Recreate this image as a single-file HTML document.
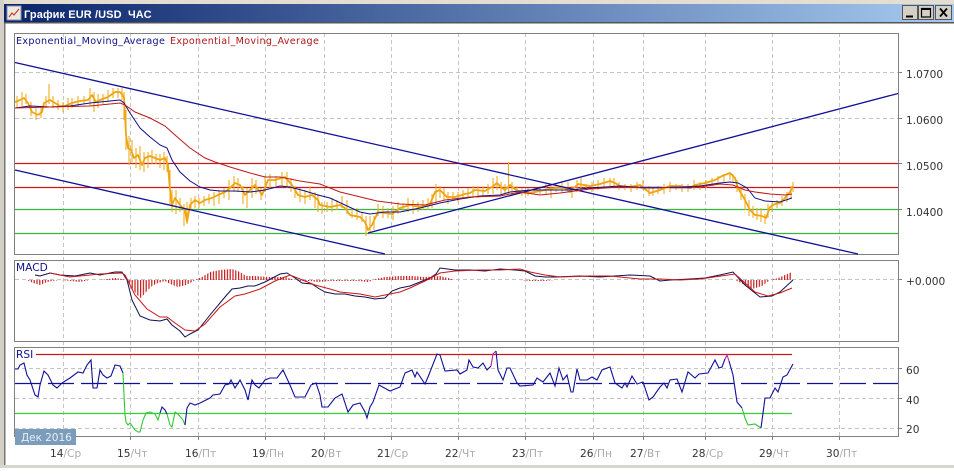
<!DOCTYPE html>
<html><head><meta charset="utf-8"><style>
html,body{margin:0;padding:0;background:#fff;width:954px;height:474px;overflow:hidden}
svg{display:block}
text{font-family:"DejaVu Sans","Liberation Sans",sans-serif;font-size:10.6px;fill:#333}
.d tspan{fill:#aaa}
</style></head><body>
<svg width="954" height="474" viewBox="0 0 954 474" xmlns="http://www.w3.org/2000/svg" shape-rendering="auto">
<defs>
<linearGradient id="t" x1="0" x2="1" y1="0" y2="0"><stop offset="0" stop-color="#0a246a"/><stop offset="1" stop-color="#a6caf0"/></linearGradient>
<pattern id="h" width="2.8" height="10" patternUnits="userSpaceOnUse"><rect width="1.2" height="10" fill="#c81818"/></pattern>
</defs>
<rect x="0" y="0" width="954" height="474" fill="#fff"/>
<rect x="0" y="0" width="954" height="4" fill="#e4ddd2"/>
<rect x="0" y="0" width="4" height="468" fill="#d4d0c8"/>
<rect x="4" y="4" width="1.5" height="462" fill="#777"/>
<rect x="0" y="465" width="954" height="3" fill="#d8d6cc"/>
<rect x="4" y="4" width="950" height="18" fill="url(#t)"/>
<rect x="4" y="22" width="950" height="1.5" fill="#555"/>
<!-- icon -->
<rect x="7" y="6" width="14" height="14" fill="#ece9e0" stroke="#8a94a8"/>
<path d="M9 17 L12 13 L14 15 L19 9" fill="none" stroke="#c04040" stroke-width="1.2"/>
<text x="24" y="18" style="font-family:'Liberation Sans',sans-serif;font-weight:bold;font-size:11px;fill:#fff;letter-spacing:.1px" xml:space="preserve">График EUR /USD  ЧАС</text>
<!-- buttons -->
<g fill="#d4d0c8" stroke="#555" stroke-width="1">
<rect x="902.5" y="5.5" width="15" height="14"/><rect x="918.5" y="5.5" width="15" height="14"/><rect x="935.5" y="5.5" width="16" height="14"/>
</g>
<path d="M906 16.5H913" stroke="#000" stroke-width="2"/>
<rect x="921.5" y="8.5" width="9" height="8.5" fill="none" stroke="#000" stroke-width="1.2"/><path d="M921 9H931" stroke="#000" stroke-width="2"/>
<path d="M940 8.5L947 16.5M947 8.5L940 16.5" stroke="#000" stroke-width="1.8"/>

<!-- grid -->
<g stroke="#c4c4c4" stroke-width="1" stroke-dasharray="4 3" fill="none">
<path d="M63.5 33V436M130.5 33V436M198.5 33V436M265.5 33V436M324.5 33V436M391.5 33V436M458.5 33V436M525.5 33V436M593.5 33V436M643.5 33V436M705.5 33V436M772.5 33V436M839.5 33V436"/>
<path d="M15 72.5H898M15 118.5H898M15 163.5H898M15 209.5H898M15 279.5H898M15 368.5H898M15 398.5H898M15 428.5H898"/>
</g>
<rect x="14.5" y="33.5" width="884" height="221" fill="none" stroke="#808080"/>
<rect x="14.5" y="260.5" width="884" height="81" fill="none" stroke="#808080"/>
<rect x="14.5" y="347.5" width="884" height="89" fill="none" stroke="#808080"/>
<path d="M898 72.5h4M898 118.5h4M898 163.5h4M898 209.5h4M898 279.5h4M898 368.5h4M898 398.5h4M898 428.5h4M63.5 436v4M130.5 436v4M198.5 436v4M265.5 436v4M324.5 436v4M391.5 436v4M458.5 436v4M525.5 436v4M593.5 436v4M643.5 436v4M705.5 436v4M772.5 436v4M839.5 436v4" stroke="#808080"/>

<!-- horizontal levels -->
<path d="M15 163.5H898M15 187.5H898" stroke="#c81818" stroke-width="1.2"/>
<path d="M15 209.5H898M15 233.5H898" stroke="#3cb43c" stroke-width="1.2"/>

<!-- price wicks -->
<path d="M17 96V108M22 92V106M26 94V104M31 102V116M36 108V120M41 106V118M46 96V108M49 84V104M53 96V108M58 100V110M63 102V112M68 98V110M72 98V108M78 96V106M84 96V104M90 88V106M94 92V112M98 94V108M103 94V104M108 90V102M113 88V98M118 88V98M122 88V100M124 92V120M126 110V150M129 136V165M132 140V162M136 148V168M140 146V170M144 152V172M148 152V168M152 150V164M156 154V164M160 154V168M164 152V170M167 156V172M170 170V205M172 190V212M176 190V214M180 198V212M184 204V226M187 202V224M191 198V210M195 196V208M199 198V208M204 196V206M209 194V204M214 192V206M219 190V204M224 188V198M229 180V200M234 176V192M238 178V192M243 186V204M247 188V208M252 178V198M256 180V194M261 188V200M265 176V192M270 174V188M276 176V186M282 172V186M287 172V188M291 178V192M295 186V198M300 188V202M305 190V204M310 186V200M315 192V208M318 194V212M322 202V214M327 202V212M332 198V212M337 200V210M342 196V208M347 200V214M352 208V218M357 208V220M362 212V222M366 216V236M370 216V234M374 216V230M378 204V216M383 206V218M388 208V218M393 206V220M398 202V214M403 204V212M408 198V212M413 200V214M418 202V212M423 200V210M428 198V210M432 194V208M436 184V204M440 186V198M444 188V200M448 192V204M453 192V200M458 192V202M463 190V198M468 188V198M473 186V198M478 186V198M483 186V196M488 184V194M493 178V194M497 176V190M501 182V194M505 184V194M508.5 162V194M512 182V196M517 186V194M522 188V196M528 188V196M534 188V194M540 186V194M546 184V194M551 184V198M556 184V192M562 182V192M568 182V192M572 186V198M577 180V192M581 178V190M586 184V190M592 182V192M598 180V190M604 178V188M610 178V186M614 178V186M619 182V190M625 184V190M631 184V192M637 182V190M643 180V190M649 186V196M653 188V196M658 186V194M664 184V194M670 182V192M676 184V190M682 184V192M688 184V192M694 180V190M700 182V190M706 180V188M712 178V186M718 176V184M724 174V182M730 172V180M733 174V182M737 180V192M741 186V200M745 194V210M749 200V216M753 206V218M757 208V220M761 208V222M765 214V224M768 204V218M772 202V212M777 200V208M782 196V206M787 192V202M791 186V198M793 182V192" stroke="#f2ac20" stroke-width="1.1" fill="none"/>
<!-- price bodies -->
<polyline fill="none" stroke="#eea510" stroke-width="1.8" stroke-linejoin="round" points="15,102 20,100 24,98 28,103 32,112 38,115 42,112 44,103 50,100 55,103 60,106 65,106 72,103 80,101 88,100 92,95 96,102 100,100 108,97 115,92 120,92 124,97 125,115 126,135 128,148 131,150 134,158 138,155 142,165 145,158 150,156 155,158 160,160 165,158 168,165 170,190 172,205 175,198 180,205 185,210 187,222 190,205 195,200 200,203 205,200 212,198 218,195 225,192 230,188 235,183 240,185 245,195 250,190 255,185 262,195 268,180 275,180 285,177 292,185 298,195 305,197 312,195 318,200 320,205 330,207 340,205 345,208 350,215 360,217 365,222 368,230 372,225 378,212 385,213 392,214 400,208 410,205 420,207 430,204 435,192 440,190 447,197 455,197 465,194 470,193 475,190 485,191 492,187 497,183 502,188 505,190 510,185 516,190 525,193 535,192 545,190 555,188 565,188 570,192 578,184 590,186 600,184 610,181 615,183 620,186 630,187 640,185 650,193 660,190 670,186 680,186 690,188 695,185 705,183 715,180 722,176 730,173 735,178 738,188 745,200 750,210 755,215 762,216 766,218 770,207 775,204 780,203 785,198 790,192 793,186"/>

<!-- trend lines -->
<path d="M15 62.5L858 254M15 170L385 254M368 233L898 93.5" stroke="#10109a" stroke-width="1.3" fill="none"/>

<!-- EMAs -->
<polyline fill="none" stroke="#10108a" stroke-width="1" points="15,108 30,106 50,107 70,106 90,103 110,101 120,100 124,103 130,113 140,128 150,137 160,145 167,148 172,160 180,172 190,181 200,187 210,190 220,191 235,191 250,192 265,190 280,186 290,187 305,191 318,195 330,198 345,205 360,212 370,214 385,212 400,212 420,208 440,203 460,199 480,196 500,195 510,192 530,190 550,190 570,190 590,188 620,186 650,188 680,187 700,186 720,183 730,182 738,183 747,188 755,198 765,201 780,202 792,198"/>
<polyline fill="none" stroke="#c01818" stroke-width="1" points="15,108 50,107 90,106 120,103 125,105 135,112 150,118 165,126 175,135 190,148 205,158 215,162 230,167 250,173 265,177 280,177 300,181 320,184 340,192 377,201 400,204 425,205 445,200 470,197 500,196 520,192 540,195 560,193 590,189 620,187 650,188 680,187 700,187 720,184 733,185 745,190 755,192 770,194 785,195 792,194"/>
<path d="M640 187.5H662M670 187.5H692" stroke="#501a80" stroke-width="1.6"/>

<!-- MACD -->
<polygon fill="url(#h)" points="27,280 33,283 40,285 47,282 52,281 60,280 70,281 80,282 90,280 100,280 115,278 122,279 127,280 132,288 137,295 141,298 146,292 152,286 158,283 165,281 170,284 178,287 186,285 192,282 197,279 202,277 210,272 220,270 232,269 240,272 246,276 255,276 270,277 285,277 292,279 300,281 310,281 318,282 330,281 345,281 358,281 368,282 376,279 385,277 400,276 412,276 425,277 440,276 448,278 455,280 520,280 530,281 545,281 555,280 735,280 743,284 752,289 762,286 770,280 778,278 785,275 792,272 792,280 27,280"/>
<polyline fill="none" stroke="#101050" stroke-width="1" points="35,275 40,276 50,273 60,275 75,276 90,273 100,275 115,272 122,272 127,280 132,300 140,316 150,320 160,321 167,319 172,325 180,331 185,337 190,334 198,330 210,315 225,297 232,289 240,288 248,286 255,286 265,282 280,274 287,273 295,278 302,283 312,284 318,288 325,292 335,294 345,294 355,296 365,297 375,299 385,298 392,291 400,288 410,286 420,282 430,278 436,274 440,268 455,270 470,270 485,271 500,269 515,270 525,271 535,276 545,277 555,277 580,276 600,277 615,276 630,275 650,276 660,281 670,280 690,279 705,278 720,275 733,272 745,285 760,297 772,296 780,292 793,280"/>
<polyline fill="none" stroke="#c81818" stroke-width="1" points="50,273 70,277 100,274 122,273 125,275 135,295 147,309 160,317 167,317 175,323 185,330 195,331 205,324 220,307 235,296 245,294 260,289 275,281 290,275 300,279 315,285 330,289 340,292 360,294 375,297 385,295 400,292 410,288 425,281 440,273 455,271 480,270 500,270 520,269 530,272 545,275 560,277 590,276 610,276 640,279 660,279 680,280 700,279 735,274 745,283 755,292 768,296 780,293 792,288"/>

<!-- RSI levels -->
<path d="M36 354.5H792" stroke="#c81818" stroke-width="1.2"/>
<path d="M15 413.5H792" stroke="#3ccc3c" stroke-width="1.2"/>
<path d="M15 383.5H898" stroke="#10109a" stroke-width="1.3" stroke-dasharray="26 7"/>
<!-- RSI -->
<polyline fill="none" stroke="#10109a" stroke-width="1.1" points="15,369 18,369 20,365 24,363 27,375 30,380 35,395 38,397 40,385 44,371 48,375 53,385 57,388 62,383 70,378 78,372 83,373 87,365 91,360 93,388 97,388 100,370 103,375 107,378 111,376 115,365 120,366 123,373"/>
<polyline fill="none" stroke="#30c830" stroke-width="1.1" points="123,373 124,395 125,415 126,422 128,425 130,423 135,430 138,432 140,432 143,420 146,413 150,412 155,414 158,420 160,413"/>
<polyline fill="none" stroke="#10109a" stroke-width="1.1" points="160,413 162,407 165,410 167,414"/>
<polyline fill="none" stroke="#30c830" stroke-width="1.1" points="167,414 170,425 172,427 175,412 178,414 183,420 185,425"/>
<polyline fill="none" stroke="#10109a" stroke-width="1.1" points="185,425 187,408 190,403 195,405 200,403 210,398 213,395 220,394 225,385 229,384 231,380 235,388 240,380 245,390 248,400 252,380 255,385 259,388 265,380 270,378 277,378 283,370 290,385 295,397 305,397 311,385 316,383 320,395 322,407 328,407 335,398 342,394 348,412 353,405 360,403 365,412 367,418 370,407 373,402 379,385 390,391 400,387 405,373 412,370 415,377 417,372 425,384 428,377 437,354 440,355 445,371 457,370 460,374 467,370 469,360 473,367 478,368 483,363 487,370 491,366"/>
<polyline fill="none" stroke="#c020a0" stroke-width="1.1" points="491,366 493,354 496,351"/>
<polyline fill="none" stroke="#10109a" stroke-width="1.1" points="496,351 498,370 503,380 507,368 510,368 517,383 520,386 533,385 537,378 543,382 550,373 555,386 559,368 563,380 567,375 571,392 573,392 577,369 580,380 587,380 592,377 597,380 602,370 610,367 615,383 622,388 625,383 627,387 632,376 637,384 640,383 643,382 649,400 653,397 660,387 664,383 667,388 670,380 677,379 682,392 688,372 695,378 699,374 708,373 715,360 719,368 722,367 725,359"/>
<polyline fill="none" stroke="#c020a0" stroke-width="1.1" points="725,359 727,355 729,361"/>
<polyline fill="none" stroke="#10109a" stroke-width="1.1" points="729,361 733,375 737,402 742,408"/>
<polyline fill="none" stroke="#30c830" stroke-width="1.1" points="742,408 745,418 748,425 755,424 761,428"/>
<polyline fill="none" stroke="#10109a" stroke-width="1.1" points="761,428 765,398 770,398 775,388 778,392 783,377 787,375 793,364"/>

<!-- labels -->
<text x="16" y="44" style="fill:#10108a;font-size:9.6px;letter-spacing:.34px">Exponential_Moving_Average</text>
<text x="170" y="44" style="fill:#b01818;font-size:9.6px;letter-spacing:.34px">Exponential_Moving_Average</text>
<rect x="16" y="262" width="32" height="11" fill="#fff"/>
<text x="16" y="271" style="fill:#10108a">MACD</text>
<rect x="16" y="349" width="20" height="11" fill="#fff"/>
<text x="16" y="358" style="fill:#10108a">RSI</text>

<text x="906" y="78">1.0700</text>
<text x="906" y="124">1.0600</text>
<text x="906" y="170">1.0500</text>
<text x="906" y="216">1.0400</text>
<text x="906" y="285">+0.000</text>
<text x="906" y="374">60</text>
<text x="906" y="404">40</text>
<text x="906" y="433">20</text>

<rect x="15" y="429" width="61" height="16" fill="#7b9cba"/>
<text x="21" y="441" style="fill:#e8eef4;letter-spacing:-.1px">Дек 2016</text>

<g class="d">
<text x="50" y="457">14<tspan>/Ср</tspan></text>
<text x="117" y="457">15<tspan>/Чт</tspan></text>
<text x="185" y="457">16<tspan>/Пт</tspan></text>
<text x="252" y="457">19<tspan>/Пн</tspan></text>
<text x="311" y="457">20<tspan>/Вт</tspan></text>
<text x="377" y="457">21<tspan>/Ср</tspan></text>
<text x="445" y="457">22<tspan>/Чт</tspan></text>
<text x="512" y="457">23<tspan>/Пт</tspan></text>
<text x="580" y="457">26<tspan>/Пн</tspan></text>
<text x="630" y="457">27<tspan>/Вт</tspan></text>
<text x="692" y="457">28<tspan>/Ср</tspan></text>
<text x="759" y="457">29<tspan>/Чт</tspan></text>
<text x="826" y="457">30<tspan>/Пт</tspan></text>
</g>
</svg>
</body></html>
